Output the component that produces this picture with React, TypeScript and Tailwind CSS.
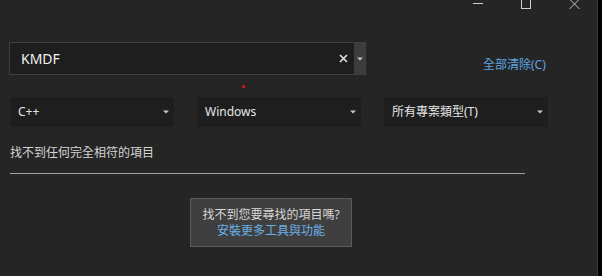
import React from "react";

const font = { fontFamily: '"Noto Sans", "Noto Sans CJK TC", sans-serif' };

function Caret() {
  return (
    <svg width="6" height="4" viewBox="0 0 6 4" className="shrink-0">
      <path d="M0 0.5 H6 L3 3.5 Z" fill="#c8c8c8" />
    </svg>
  );
}

function Dropdown({ label }: { label: string }) {
  return (
    <div className="flex h-[30px] w-[164px] items-center justify-between bg-[#1e1e1e] pl-[8px] pr-[5px] text-[12px] text-[#e6e6e6]">
      <span>{label}</span>
      <Caret />
    </div>
  );
}

export default function App() {
  return (
    <div className="flex h-[276px] w-[602px] overflow-hidden bg-[#252526]" style={font}>
      <main className="flex w-[597px] flex-col">
        {/* title bar, cropped at the top */}
        <div className="flex h-[10px] items-start">
          <svg width="10" height="10" className="ml-[473px]">
            <line x1="0" y1="3.5" x2="10" y2="3.5" stroke="#d0d0d0" strokeWidth="1" />
          </svg>
          <svg width="10" height="10" className="ml-[38px]">
            <rect x="0.5" y="-3" width="9" height="11.5" fill="none" stroke="#d0d0d0" strokeWidth="1" />
          </svg>
          <svg width="11" height="10" className="ml-[38px]">
            <path d="M0.5 -1 L10.5 9 M10.5 -1 L0.5 9" stroke="#c0c0c0" strokeWidth="1" />
          </svg>
        </div>

        <div className="mt-[32px] flex items-end">
          <div className="ml-[9px] flex h-[33px] w-[357px] border border-[#3f3f3f] bg-[#1e1e1e]">
            <div className="flex flex-1 items-center pl-[11px] pr-[6px] text-[14px] text-[#f2f2f2]">
              <span className="flex-1">KMDF</span>
              <svg width="9" height="9" viewBox="0 0 9 9">
                <path d="M1 1 L8 8 M8 1 L1 8" stroke="#e0e0e0" strokeWidth="1.6" />
              </svg>
            </div>
            <div className="flex w-[11px] items-center justify-center bg-[#3c3c3c]">
              <Caret />
            </div>
          </div>
          <span className="mb-[1px] ml-[117px] text-[12px] text-[#5ea6e0]">全部清除(C)</span>
        </div>

        <div className="ml-[242px] mt-[10px] h-[3px] w-[3px] rounded-full bg-[#e01b1b]" />

        <div className="ml-[10px] mt-[9px] flex gap-[23px]">
          <Dropdown label="C++" />
          <Dropdown label="Windows" />
          <Dropdown label="所有專案類型(T)" />
        </div>

        <p className="ml-[10px] mt-[17px] text-[12px] text-[#d4d4d4]">找不到任何完全相符的項目</p>

        <div className="ml-[10px] mt-[11px] h-px w-[515px] bg-[#a0a0a0]" />

        <div className="ml-[190px] mt-[24px] flex h-[49px] w-[162px] flex-col items-center justify-center border border-[#5a5a5a] bg-[#3f3f3f] text-[12px] leading-[16px]">
          <span className="text-[#d8d8d8]">找不到您要尋找的項目嗎?</span>
          <span className="text-[#6bb0e6]">安裝更多工具與功能</span>
        </div>
      </main>
      <div className="w-px bg-[#3c3c3c]" />
      <div className="flex-1 bg-black" />
    </div>
  );
}
